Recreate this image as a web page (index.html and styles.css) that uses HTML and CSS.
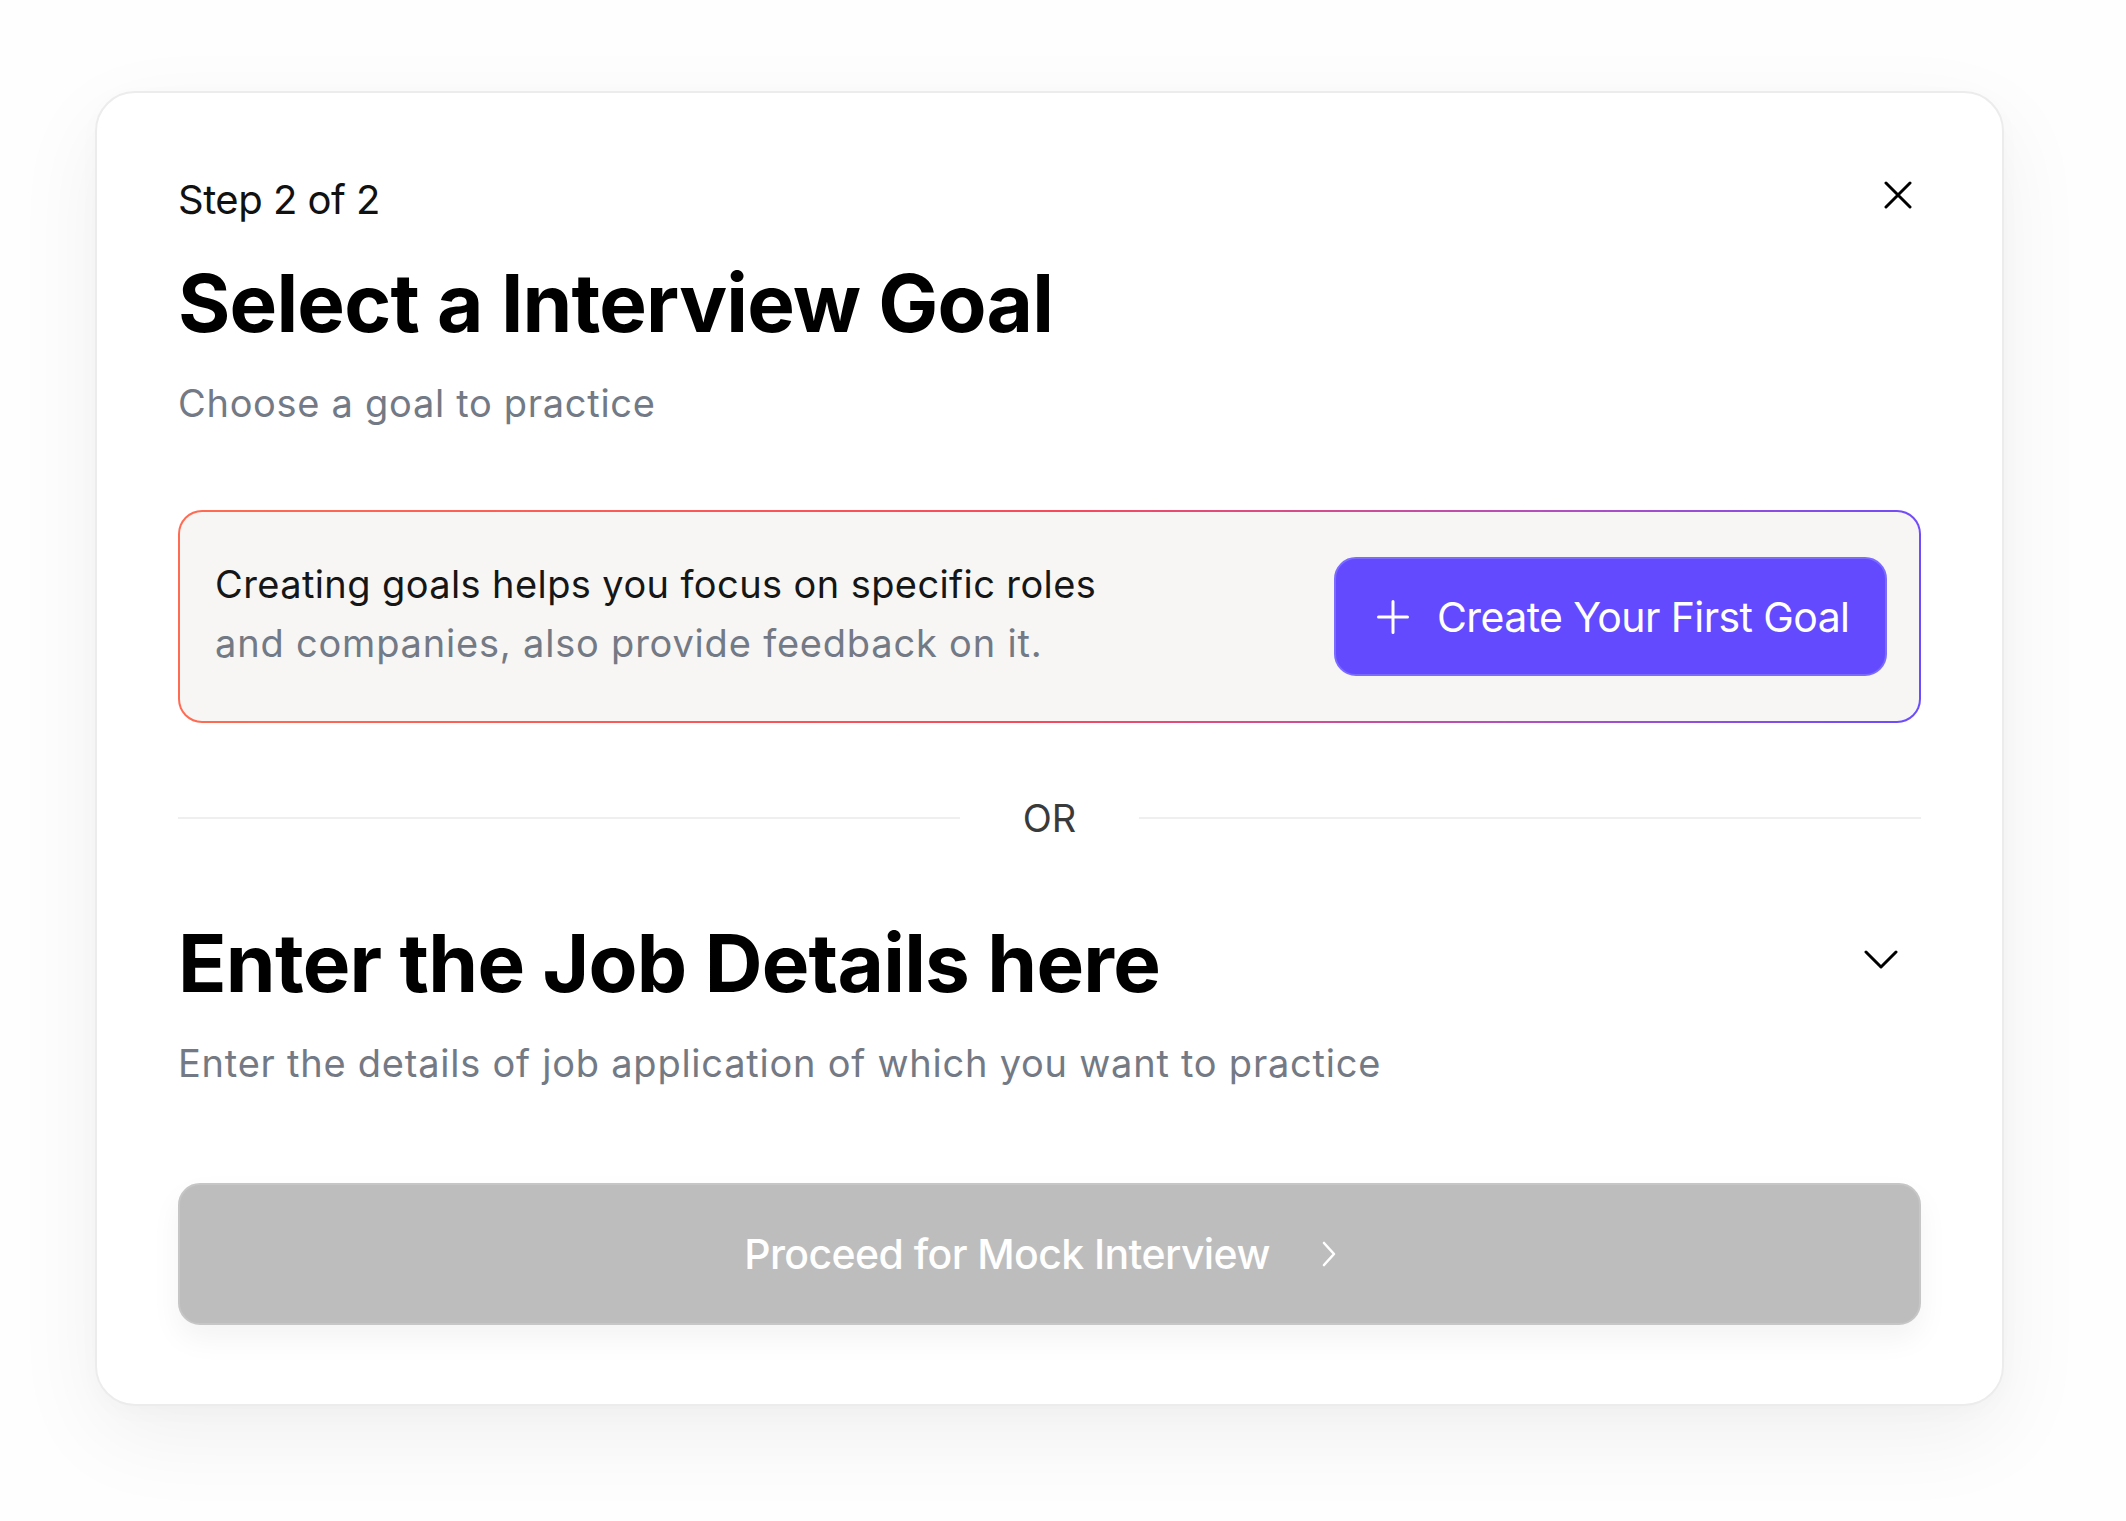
FILE: index.html
```html
<!DOCTYPE html>
<html lang="en">
<head>
<meta charset="utf-8">
<title>Select a Interview Goal</title>
<link rel="stylesheet" href="styles.css">
</head>
<body>
<div class="card">
  <div class="header">
    <div class="step">Step 2 of 2</div>
    <svg class="close" width="28" height="28" viewBox="0 0 28 28" aria-label="Close">
      <path d="M2 2 L26 26 M26 2 L2 26" fill="none" stroke="#000" stroke-width="3" stroke-linecap="round"/>
    </svg>
  </div>
  <h1 class="title">Select a Interview Goal</h1>
  <p class="subtitle">Choose a goal to practice</p>

  <div class="banner">
    <p class="banner-text">
      <span class="banner-strong">Creating goals helps you focus on specific roles</span><br>
      <span class="banner-muted">and companies, also provide feedback on it.</span>
    </p>
    <button class="create-btn" type="button">
      <svg class="plus" width="32" height="34" viewBox="0 0 32 34">
        <path d="M16 1.5 V32.5 M1.5 17 H30.5" fill="none" stroke="#fff" stroke-width="3" stroke-linecap="round"/>
      </svg>
      <span>Create Your First Goal</span>
    </button>
  </div>

  <div class="divider">
    <span class="divider-line"></span>
    <span class="divider-text">OR</span>
    <span class="divider-line"></span>
  </div>

  <div class="job-row">
    <h2 class="job-title">Enter the Job Details here</h2>
    <svg class="chevron-down" width="34" height="20" viewBox="0 0 34 20">
      <path d="M2 2 L17 17 L32 2" fill="none" stroke="#000" stroke-width="3" stroke-linecap="round" stroke-linejoin="round"/>
    </svg>
  </div>
  <p class="job-sub">Enter the details of job application of which you want to practice</p>

  <button class="proceed-btn" type="button">
    <span>Proceed for Mock Interview</span>
    <svg class="chevron-right" width="18" height="28" viewBox="0 0 18 28">
      <path d="M4 3 L14 14 L4 25" fill="none" stroke="#fff" stroke-width="2.6" stroke-linecap="round" stroke-linejoin="round"/>
    </svg>
  </button>
</div>
</body>
</html>
```

FILE: styles.css
```css
* { box-sizing: border-box; }

html, body {
  margin: 0;
  padding: 0;
  background: #fefefe;
  font-family: "Inter", "Noto Sans", "Liberation Sans", sans-serif;
}

body {
  width: 2126px;
  height: 1521px;
  overflow: hidden;
}

.card {
  margin: 91px 0 0 95px;
  width: 1909px;
  height: 1315px;
  background: #fff;
  border: 2px solid #ececec;
  border-radius: 40px;
  padding: 83px 81px 0 81px;
  box-shadow: 0 30px 90px rgba(0, 0, 0, 0.06), 0 6px 24px rgba(0, 0, 0, 0.02);
}

.header {
  display: flex;
  justify-content: space-between;
  align-items: flex-start;
  height: 48px;
}

.step {
  font-size: 40px;
  line-height: 48px;
  color: #111;
  letter-spacing: -0.5px;
}

.close {
  margin-top: 5px;
  margin-right: 9px;
}

.title {
  margin: 31px 0 0 0;
  font-size: 80px;
  line-height: 96px;
  font-weight: 700;
  color: #000;
  letter-spacing: -0.8px;
}

.subtitle {
  margin: 30px 0 0 0;
  font-size: 38px;
  line-height: 44px;
  color: #737a85;
  letter-spacing: 0.7px;
}

.banner {
  margin-top: 85px;
  height: 213px;
  display: flex;
  align-items: center;
  justify-content: space-between;
  padding: 0 32px 0 35px;
  border: 2px solid transparent;
  border-radius: 24px;
  background:
    linear-gradient(#f7f6f5, #f7f6f5) padding-box,
    linear-gradient(100deg, #ff6c52 0%, #f64a5c 50%, #b04fc0 78%, #6a4cff 100%) border-box;
}

.banner-text {
  margin: 0 0 6px 0;
  font-size: 38px;
  line-height: 59px;
  letter-spacing: 0.5px;
}

.banner-strong { color: #161616; letter-spacing: 0.4px; }
.banner-muted { color: #737a85; letter-spacing: 0.8px; }

.create-btn {
  width: 553px;
  height: 119px;
  display: flex;
  align-items: center;
  gap: 28px;
  padding: 0 0 0 41px;
  border: 2px solid #7c6bff;
  border-radius: 22px;
  background: #634aff;
  color: #fff;
  font-family: inherit;
  font-size: 41px;
  font-weight: 400;
  letter-spacing: -0.6px;
  cursor: pointer;
}

.plus { flex: none; }

.divider {
  margin-top: 72px;
  height: 46px;
  display: flex;
  align-items: center;
}

.divider-line {
  flex: 1;
  height: 2px;
  background: #efefef;
}

.divider-text {
  padding: 0 63px;
  font-size: 38px;
  line-height: 46px;
  color: #3a3a3a;
}

.job-row {
  margin-top: 74px;
  display: flex;
  align-items: center;
  justify-content: space-between;
}

.job-title {
  margin: 0;
  font-size: 80px;
  line-height: 96px;
  font-weight: 700;
  color: #000;
  letter-spacing: -0.75px;
}

.chevron-down {
  margin-right: 23px;
  margin-bottom: 6px;
}

.job-sub {
  margin: 30px 0 0 0;
  font-size: 38px;
  line-height: 44px;
  color: #737a85;
  letter-spacing: 0.76px;
}

.proceed-btn {
  margin-top: 98px;
  width: 100%;
  height: 142px;
  display: flex;
  align-items: center;
  justify-content: center;
  gap: 50px;
  padding: 0 17px 0 0;
  border: 2px solid #c6c6c6;
  border-radius: 22px;
  background: #bdbdbd;
  color: #fff;
  font-family: inherit;
  font-size: 41px;
  font-weight: 500;
  letter-spacing: -0.6px;
  box-shadow: 0 14px 30px rgba(0, 0, 0, 0.05);
  cursor: pointer;
}
```
